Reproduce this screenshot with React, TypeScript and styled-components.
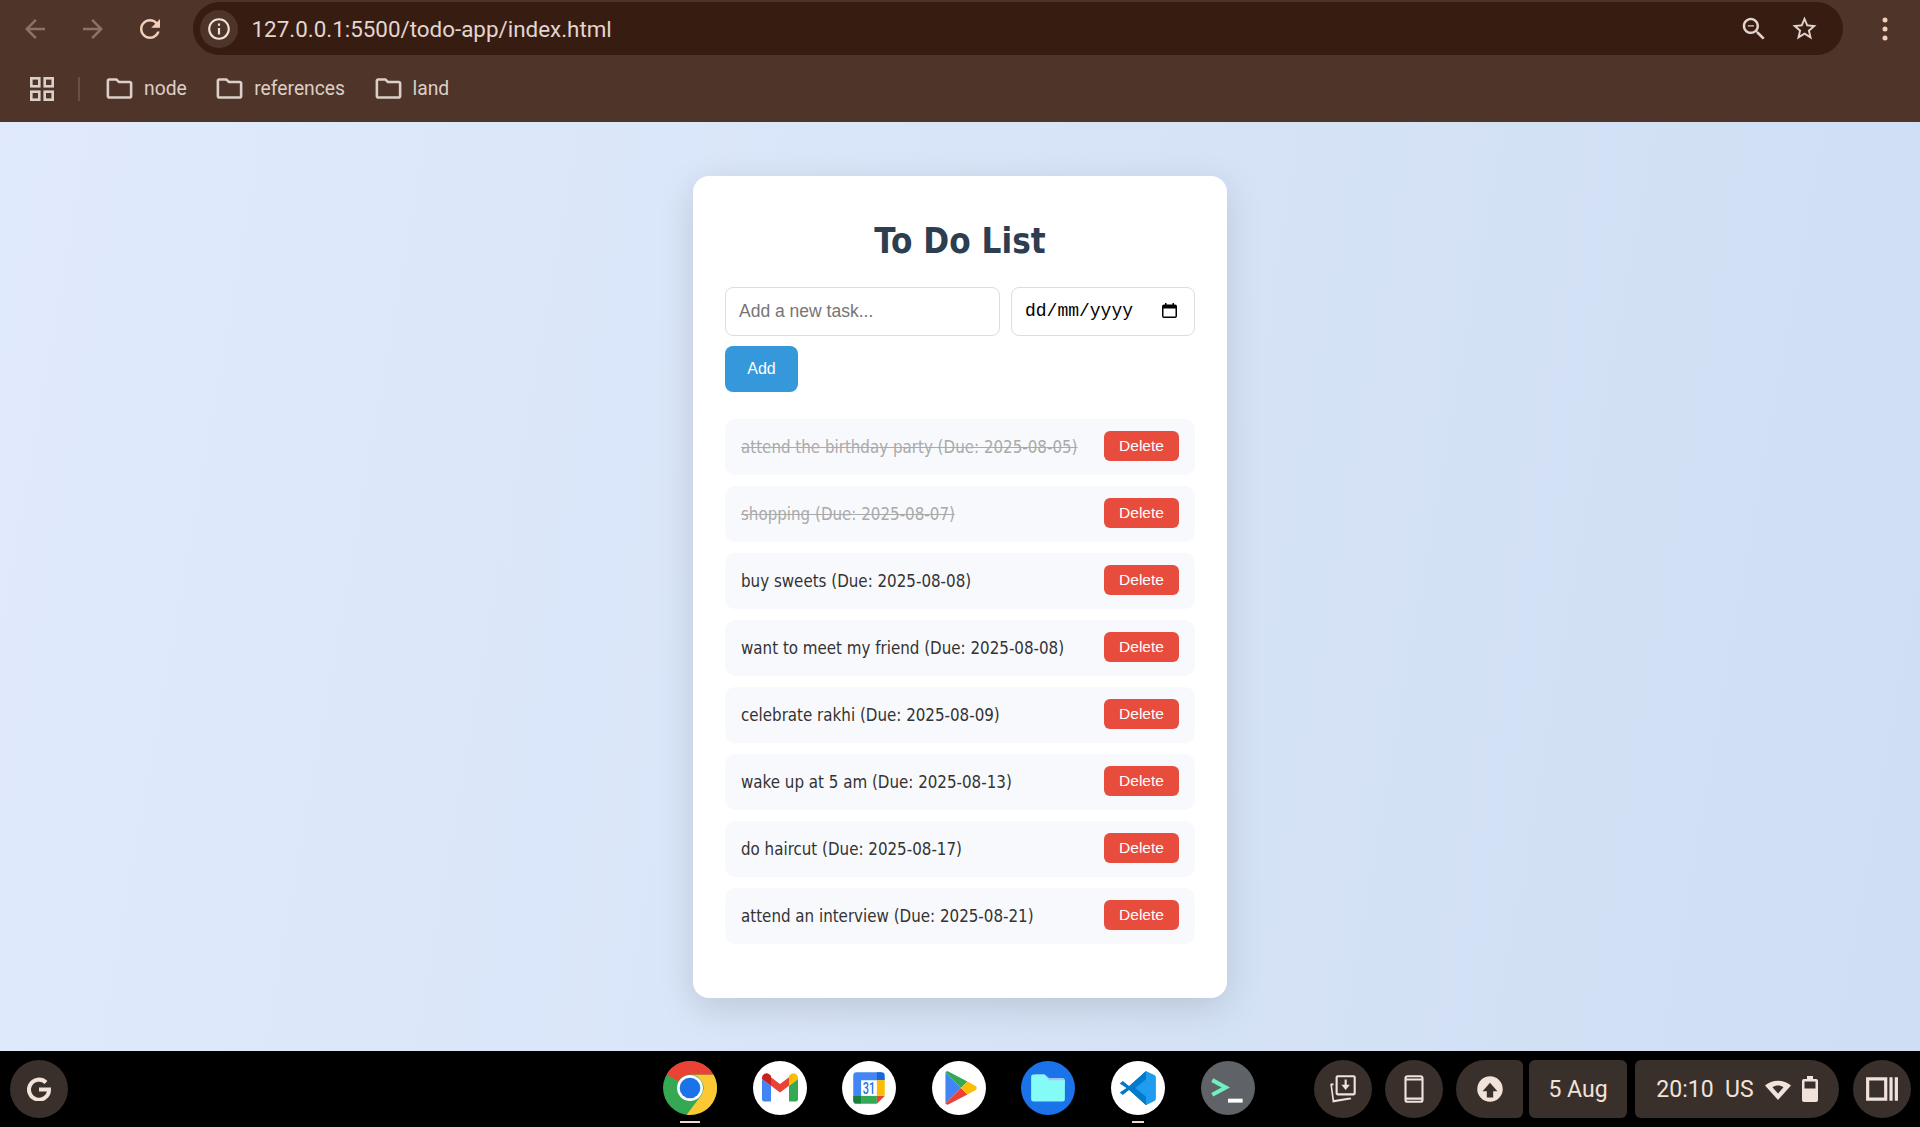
import React, { useState } from 'react';
import styled, { createGlobalStyle } from 'styled-components';

const GlobalStyle = createGlobalStyle`
  html, body { margin: 0; padding: 0; height: 100%; }
  * { box-sizing: border-box; }
  body { font-family: "Roboto", sans-serif; overflow: hidden; }
`;

const Screen = styled.div`
  height: 1127px;
  display: flex;
  flex-direction: column;
`;

/* browser chrome */
const BrowserBar = styled.header`
  height: 122px;
  background: #4f3529;
  flex-shrink: 0;
`;

const Toolbar = styled.div`
  height: 55px;
  padding: 2px 20px 0;
  display: flex;
  align-items: center;
`;

const NavIcon = styled.svg<{ $color: string }>`
  width: 30px;
  height: 30px;
  fill: ${p => p.$color};
  flex-shrink: 0;
  margin-right: 27.5px;
  &:last-of-type { margin-right: 0; }
`;

const Omnibox = styled.div`
  flex: 1;
  height: 53px;
  margin-right: 27px;
  border-radius: 27px;
  background: #371c12;
  display: flex;
  align-items: center;
  padding: 0 24px 0 7px;
`;

const InfoChip = styled.div`
  width: 38px;
  height: 38px;
  border-radius: 50%;
  background: #4f3529;
  display: flex;
  align-items: center;
  justify-content: center;
  margin-right: 14px;
`;

const UrlText = styled.span`
  flex: 1;
  font-size: 22.4px;
  color: #e2d6cf;
`;

const OmniIcon = styled.svg<{ $size: number }>`
  width: ${p => p.$size}px;
  height: ${p => p.$size}px;
  fill: #e2d3cc;
  margin-left: 21px;
`;

const BookmarkBar = styled.div`
  height: 67px;
  padding-left: 30px;
  display: flex;
  align-items: center;
`;

const Separator = styled.div`
  width: 2px;
  height: 24px;
  background: #6a5144;
  margin: 0 24px;
`;

const Bookmark = styled.div`
  display: flex;
  align-items: center;
  gap: 9px;
  margin-right: 27.5px;
  font-size: 19.3px;
  color: #dccfc7;
`;

const FolderIcon = styled.svg`
  width: 31px;
  height: 31px;
  fill: #dccfc7;
`;

/* page */
const Page = styled.main`
  flex: 1;
  background: linear-gradient(100deg, #e0eafc, #cfdef3);
  display: flex;
  justify-content: center;
  align-items: flex-start;
  padding-top: 54px;
`;

const Card = styled.section`
  width: 534px;
  height: 822px;
  background: #fff;
  border-radius: 16px;
  padding: 40px 32px 0;
  box-shadow: 0 10px 36px rgba(0, 0, 0, 0.13);
  font-family: "DejaVu Sans Condensed", "DejaVu Sans", sans-serif;
`;

const Title = styled.h1`
  margin: 0 0 21px;
  height: 50px;
  line-height: 50px;
  text-align: center;
  font-size: 34.7px;
  font-weight: 700;
  color: #2c3e50;
`;

const Form = styled.form`
  display: flex;
  flex-wrap: wrap;
  gap: 10px 11px;
  margin-bottom: 27px;
`;

const TaskInput = styled.input`
  width: 275px;
  height: 49px;
  padding: 0 13px 1px;
  border: 1px solid #ddd;
  border-radius: 8px;
  font: 17.5px "Liberation Sans", sans-serif;
  &::placeholder { color: #757575; }
`;

const DateField = styled.div`
  width: 184px;
  height: 49px;
  padding: 0 17px 2px 13px;
  border: 1px solid #ddd;
  border-radius: 8px;
  display: flex;
  align-items: center;
  justify-content: space-between;
  font: 18px "Liberation Mono", monospace;
  color: #000;
`;

const AddButton = styled.button`
  width: 73px;
  height: 46px;
  border: none;
  border-radius: 8px;
  background: #3498db;
  color: #fff;
  font: 16px "Liberation Sans", sans-serif;
`;

const List = styled.ul`
  list-style: none;
  margin: 0;
  padding: 0;
  display: flex;
  flex-direction: column;
  gap: 11px;
`;

const Item = styled.li`
  height: 56px;
  padding: 0 16px;
  border-radius: 10px;
  background: #f8f9fd;
  display: flex;
  align-items: center;
  justify-content: space-between;
`;

const ItemText = styled.span<{ $done: boolean }>`
  font-size: 16.8px;
  color: ${p => (p.$done ? '#aaa' : '#333')};
  text-decoration: ${p => (p.$done ? 'line-through' : 'none')};
`;

const DeleteButton = styled.button`
  width: 75px;
  height: 30px;
  margin-bottom: 2px;
  border: none;
  border-radius: 6px;
  padding: 0;
  background: #e74c3c;
  color: #fff;
  font: 15.5px "Liberation Sans", sans-serif;
`;

/* chromeos shelf */
const Shelf = styled.footer`
  height: 76px;
  background: #000;
  flex-shrink: 0;
  position: relative;
  display: flex;
  align-items: center;
  justify-content: space-between;
  padding: 0 9px 0 10px;
`;

const Launcher = styled.div`
  width: 58px;
  height: 58px;
  border-radius: 50%;
  background: #39302c;
  display: flex;
  align-items: center;
  justify-content: center;
`;

const Dock = styled.div`
  position: absolute;
  left: 663px;
  top: 10px;
  display: flex;
  gap: 35.6px;
`;

const DockApp = styled.div`
  position: relative;
  width: 54px;
  height: 54px;
`;

const AppGlyph = styled.svg`
  display: block;
  width: 54px;
  height: 54px;
`;

const RunningDot = styled.div<{ $w: number }>`
  position: absolute;
  left: 50%;
  bottom: -8px;
  transform: translateX(-50%);
  width: ${p => p.$w}px;
  height: 2px;
  background: #f2d9cb;
`;

const Tray = styled.div`
  display: flex;
  align-items: center;
`;

const TrayCircle = styled.div<{ $mr: number }>`
  width: 58px;
  height: 58px;
  border-radius: 50%;
  background: #39302c;
  display: flex;
  align-items: center;
  justify-content: center;
  margin-right: ${p => p.$mr}px;
`;

const TrayPill = styled.div<{ $w: number; $radius: string; $mr: number }>`
  width: ${p => p.$w}px;
  height: 58px;
  border-radius: ${p => p.$radius};
  background: #39302c;
  display: flex;
  align-items: center;
  justify-content: center;
  gap: 10px;
  margin-right: ${p => p.$mr}px;
  color: #f1e2da;
  font-size: 23px;
`;

const TrayIcon = styled.svg`
  width: 34px;
  height: 34px;
  fill: #f1e2da;
`;

const tasks = [
  { text: 'attend the birthday party (Due: 2025-08-05)', done: true },
  { text: 'shopping (Due: 2025-08-07)', done: true },
  { text: 'buy sweets (Due: 2025-08-08)', done: false },
  { text: 'want to meet my friend (Due: 2025-08-08)', done: false },
  { text: 'celebrate rakhi (Due: 2025-08-09)', done: false },
  { text: 'wake up at 5 am (Due: 2025-08-13)', done: false },
  { text: 'do haircut (Due: 2025-08-17)', done: false },
  { text: 'attend an interview (Due: 2025-08-21)', done: false },
];

const folderPath =
  'M9.17 6l2 2H20v10H4V6h5.17M10 4H4c-1.1 0-1.99.9-1.99 2L2 18c0 1.1.9 2 2 2h16c1.1 0 2-.9 2-2V8c0-1.1-.9-2-2-2h-8l-2-2z';

const Folder = () => (
  <FolderIcon viewBox="0 0 24 24">
    <path d={folderPath} />
  </FolderIcon>
);

const App = () => {
  const [task, setTask] = useState('');

  return (
    <Screen>
      <GlobalStyle />
      <BrowserBar>
        <Toolbar>
          <NavIcon $color="#8c7264" viewBox="0 0 24 24">
            <path d="M20 11H7.83l5.59-5.59L12 4l-8 8 8 8 1.41-1.41L7.83 13H20v-2z" />
          </NavIcon>
          <NavIcon $color="#8c7264" viewBox="0 0 24 24">
            <path d="M12 4l-1.41 1.41L16.17 11H4v2h12.17l-5.58 5.59L12 20l8-8z" />
          </NavIcon>
          <NavIcon $color="#f3cfba" viewBox="0 0 24 24">
            <path d="M17.65 6.35C16.2 4.9 14.21 4 12 4c-4.42 0-7.99 3.58-7.99 8s3.57 8 7.99 8c3.73 0 6.84-2.55 7.73-6h-2.08c-.82 2.33-3.04 4-5.65 4-3.31 0-6-2.69-6-6s2.69-6 6-6c1.66 0 3.14.69 4.22 1.78L13 11h7V4l-2.35 2.35z" />
          </NavIcon>
          <Omnibox>
            <InfoChip>
              <svg width="26" height="26" viewBox="0 0 24 24" fill="#f0e3dc">
                <path d="M11 7h2v2h-2zm0 4h2v6h-2zm1-9C6.48 2 2 6.48 2 12s4.48 10 10 10 10-4.48 10-10S17.52 2 12 2zm0 18c-4.41 0-8-3.59-8-8s3.59-8 8-8 8 3.59 8 8-3.59 8-8 8z" />
              </svg>
            </InfoChip>
            <UrlText>127.0.0.1:5500/todo-app/index.html</UrlText>
            <OmniIcon $size={30} viewBox="0 0 24 24">
              <path d="M15.5 14h-.79l-.28-.27C15.41 12.59 16 11.11 16 9.5 16 5.91 13.09 3 9.5 3S3 5.91 3 9.5 5.91 16 9.5 16c1.61 0 3.09-.59 4.23-1.57l.27.28v.79l5 4.99L20.49 19l-4.99-5zm-6 0C7.01 14 5 11.99 5 9.5S7.01 5 9.5 5 14 7.01 14 9.5 11.99 14 9.5 14zM7 9h5v1H7z" />
            </OmniIcon>
            <OmniIcon $size={29} viewBox="0 0 24 24">
              <path d="M22 9.24l-7.19-.62L12 2 9.19 8.63 2 9.24l5.46 4.73L5.82 21 12 17.27 18.18 21l-1.63-7.03L22 9.24zM12 15.4l-3.76 2.27 1-4.28-3.32-2.88 4.38-.38L12 6.1l1.71 4.04 4.38.38-3.32 2.88 1 4.28L12 15.4z" />
            </OmniIcon>
          </Omnibox>
          <NavIcon $color="#f3cfba" viewBox="0 0 30 30">
            <circle cx="15" cy="6" r="2.5" />
            <circle cx="15" cy="15" r="2.5" />
            <circle cx="15" cy="24" r="2.5" />
          </NavIcon>
        </Toolbar>
        <BookmarkBar>
          <svg width="24" height="24" viewBox="0 0 24 24" fill="none" stroke="#dccfc7" strokeWidth="2.6">
            <rect x="1.3" y="1.3" width="8" height="8" />
            <rect x="14.7" y="1.3" width="8" height="8" />
            <rect x="1.3" y="14.7" width="8" height="8" />
            <rect x="14.7" y="14.7" width="8" height="8" />
          </svg>
          <Separator />
          <Bookmark><Folder />node</Bookmark>
          <Bookmark><Folder />references</Bookmark>
          <Bookmark><Folder />land</Bookmark>
        </BookmarkBar>
      </BrowserBar>

      <Page>
        <Card>
          <Title>To Do List</Title>
          <Form onSubmit={e => e.preventDefault()}>
            <TaskInput
              type="text"
              placeholder="Add a new task..."
              value={task}
              onChange={e => setTask(e.target.value)}
            />
            <DateField>
              <span>dd/mm/yyyy</span>
              <svg width="15" height="15" viewBox="0 0 15 15">
                <path
                  fillRule="evenodd"
                  d="M3 0h1.500v1.500h6V0H12v1.500h1a2 2 0 0 1 2 2V13a2 2 0 0 1-2 2H2a2 2 0 0 1-2-2V3.500a2 2 0 0 1 2-2h1zM1.500 5.500V13a.5.5 0 0 0 .5.5h11a.5.5 0 0 0 .5-.5V5.500z"
                />
              </svg>
            </DateField>
            <AddButton type="submit">Add</AddButton>
          </Form>
          <List>
            {tasks.map(t => (
              <Item key={t.text}>
                <ItemText $done={t.done}>{t.text}</ItemText>
                <DeleteButton type="button">Delete</DeleteButton>
              </Item>
            ))}
          </List>
        </Card>
      </Page>

      <Shelf>
        <Launcher>
          <svg width="24" height="24" viewBox="0 0 24 24" fill="none" stroke="#f1e2da" strokeWidth="4">
            <path d="M19 5.5A10 10 0 1 0 22 12.5H12" />
          </svg>
        </Launcher>
        <Dock>
          <DockApp>
            <AppGlyph viewBox="0 0 48 48">
              <circle cx="24" cy="24" r="24" fill="#34a853" />
              <path fill="#fcc934" d="M24 12h20.78A24 24 0 0 1 21 47.8L34.4 30A12 12 0 0 0 24 12z" />
              <path fill="#ea4335" d="M3.2 12a24 24 0 0 1 41.58 0H24a12 12 0 0 0-10.4 6z" />
              <circle cx="24" cy="24" r="11.5" fill="#fff" />
              <circle cx="24" cy="24" r="9.2" fill="#1a73e8" />
            </AppGlyph>
            <RunningDot $w={20} />
          </DockApp>
          <DockApp>
            <AppGlyph viewBox="0 0 48 48">
              <circle cx="24" cy="24" r="24" fill="#fff" />
              <path fill="#4285f4" d="M10 36h6V22l-8-6v18a2 2 0 0 0 2 2z" />
              <path fill="#34a853" d="M32 36h6a2 2 0 0 0 2-2V16l-8 6z" />
              <path fill="#ea4335" d="M16 14.500l8 6 8-6V22l-8 6-8-6z" />
              <path fill="#c5221f" d="M8 16v-1a4 4 0 0 1 6.400-3.200L16 13v9z" />
              <path fill="#fbbc04" d="M40 16v-1a4 4 0 0 0-6.400-3.200L32 13v9z" />
            </AppGlyph>
          </DockApp>
          <DockApp>
            <AppGlyph viewBox="0 0 48 48">
              <circle cx="24" cy="24" r="24" fill="#fff" />
              <path fill="#4285f4" d="M13 10h22v7H17v18h-7V13a3 3 0 0 1 3-3z" />
              <path fill="#1967d2" d="M31 10h4a3 3 0 0 1 3 3v4h-7z" />
              <path fill="#fbbc04" d="M31 17h7v14h-7z" />
              <path fill="#34a853" d="M17 31h14v7H17z" />
              <path fill="#188038" d="M10 31h7v7h-4a3 3 0 0 1-3-3z" />
              <path fill="#ea4335" d="M31 31h7l-7 7z" />
              <text x="24" y="29.500" textAnchor="middle" textLength="11" lengthAdjust="spacingAndGlyphs" fontFamily="Roboto, sans-serif" fontWeight="500" fontSize="15" fill="#1a73e8">31</text>
            </AppGlyph>
          </DockApp>
          <DockApp>
            <AppGlyph viewBox="0 0 48 48">
              <circle cx="24" cy="24" r="24" fill="#fff" />
              <g transform="translate(24 24) scale(1.15) translate(-24.500 -24)">
                <path fill="#4285f4" d="M14 12v24l12-12z" />
                <path fill="#34a853" d="M14 12c.5-.8 1.600-1.200 2.600-.6L31 19l-5 5z" />
                <path fill="#ea4335" d="M14 36c.5.8 1.600 1.200 2.600.6L31 29l-5-5z" />
                <path fill="#fbbc04" d="M31 19l6 3.200c1.600.9 1.600 2.700 0 3.600L31 29l-5-5z" />
              </g>
            </AppGlyph>
          </DockApp>
          <DockApp>
            <AppGlyph viewBox="0 0 48 48">
              <circle cx="24" cy="24" r="24" fill="#1a73e8" />
              <path fill="#a4c2f4" d="M12 14a2 2 0 0 1 2-2h7l4 3h12a2 2 0 0 1 2 2v4H12z" />
              <path fill="#84fbf6" d="M9 14a2 2 0 0 1 2-2h10l4 5h14v17a2 2 0 0 1-2 2H11a2 2 0 0 1-2-2z" />
            </AppGlyph>
          </DockApp>
          <DockApp>
            <AppGlyph viewBox="0 0 48 48">
              <circle cx="24" cy="24" r="24" fill="#fff" />
              <path fill="#0065a9" d="M31 9l7.500 3.600a2 2 0 0 1 1.100 1.800v19.200a2 2 0 0 1-1.100 1.800L31 39 16 25.500 10.500 30 8 28l6-4-6-4 2.500-2 5.500 4.500z" />
              <path fill="#007acc" d="M31 9l-15 13.500L10.500 18 8 20l6 4-6 4 2.500 2 5.500-4.500L31 39z" />
              <path fill="#1f9cf0" d="M31 9l7.500 3.600a2 2 0 0 1 1.100 1.800v19.200a2 2 0 0 1-1.100 1.800L31 39V31.500L21.500 24 31 16.500z" />
            </AppGlyph>
            <RunningDot $w={12} />
          </DockApp>
          <DockApp>
            <AppGlyph viewBox="0 0 48 48">
              <circle cx="24" cy="24" r="24" fill="#5f6368" />
              <path fill="none" stroke="#6ff0c0" strokeWidth="3.600" d="M10 17l12 6.500-12 6.500" />
              <path fill="#fff" d="M24 33.500h13V37H24z" />
            </AppGlyph>
          </DockApp>
        </Dock>
        <span />
        <Tray>
          <TrayCircle $mr={13}>
            <TrayIcon viewBox="0 0 32 32">
              <path d="M11 3h15a2 2 0 0 1 2 2v15a2 2 0 0 1-2 2H11a2 2 0 0 1-2-2V5a2 2 0 0 1 2-2zm0 2v15h15V5zm6.500 2h2v5h3l-4 5-4-5h3zM4 11l3-.5v2l-1.300.2 1.900 13.600 13.500-2h2.300l.4 1.400-17.500 3z" />
            </TrayIcon>
          </TrayCircle>
          <TrayCircle $mr={13}>
            <TrayIcon viewBox="0 0 32 32">
              <path d="M10 3h12a3 3 0 0 1 3 3v20a3 3 0 0 1-3 3H10a3 3 0 0 1-3-3V6a3 3 0 0 1 3-3zM9 8v16h14V8zm0-2h14a1 1 0 0 0-1-1H10a1 1 0 0 0-1 1zm0 20a1 1 0 0 0 1 1h12a1 1 0 0 0 1-1z" />
            </TrayIcon>
          </TrayCircle>
          <TrayPill $w={67} $radius="29px 6px 6px 29px" $mr={6}>
            <TrayIcon viewBox="0 0 32 32">
              <path fillRule="evenodd" d="M16 4a12 12 0 1 0 0 24 12 12 0 0 0 0-24zm0 6l7 8h-4v6h-6v-6H9z" />
            </TrayIcon>
          </TrayPill>
          <TrayPill $w={98} $radius="6px" $mr={8}>5 Aug</TrayPill>
          <TrayPill $w={204} $radius="6px 29px 29px 6px" $mr={14}>
            <span>20:10&nbsp; US</span>
            <svg width="28" height="24" viewBox="0 0 28 24" fill="#f1e2da">
              <path fillRule="evenodd" d="M14 23L1 8.500C8 2 20 2 27 8.500zM14 16.500l5.500-6.200c-3-2.300-8-2.300-11 0z" />
            </svg>
            <svg width="16" height="28" viewBox="0 0 16 28" fill="#f1e2da">
              <path fillRule="evenodd" d="M5 1h6v3h3a2 2 0 0 1 2 2v19a2 2 0 0 1-2 2H2a2 2 0 0 1-2-2V6a2 2 0 0 1 2-2h3zM2.500 6.500v7h11v-7z" />
            </svg>
          </TrayPill>
          <TrayCircle $mr={0}>
            <TrayIcon viewBox="0 0 32 32">
              <path fillRule="evenodd" d="M1 5h20v22H1zm3 3v16h14V8zM23 5h3v22h-3zM28 5h3v22h-3z" />
            </TrayIcon>
          </TrayCircle>
        </Tray>
      </Shelf>
    </Screen>
  );
};

export default App;
